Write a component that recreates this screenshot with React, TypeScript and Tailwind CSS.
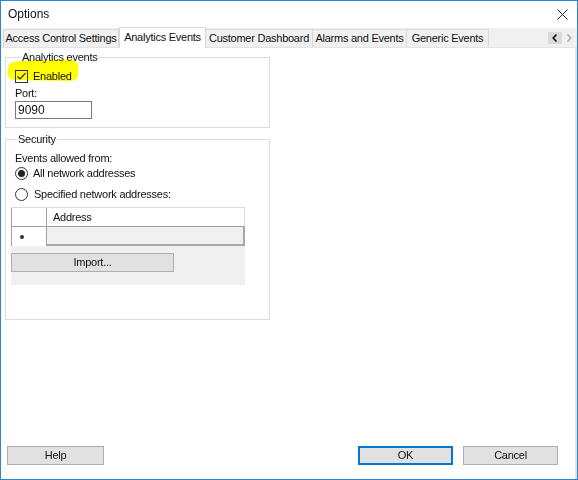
export default function App() {
  const tabs = [
    { label: "Access Control Settings", w: "w-[116px]" },
    { label: "Analytics Events", w: "w-[87px]", active: true },
    { label: "Customer Dashboard", w: "w-[107px]" },
    { label: "Alarms and Events", w: "w-[94px]" },
    { label: "Generic Events", w: "w-[82px]" },
  ];

  return (
    <div className="w-[578px] h-[480px] bg-white border border-[#2b87d6] flex flex-col font-['Liberation_Sans',Arial,sans-serif] text-[11px] leading-[13px] text-[#111] tracking-[-0.25px] overflow-hidden">
      {/* title bar */}
      <div className="h-[27px] shrink-0 flex items-center justify-between pl-[7px] pr-[9px]">
        <span className="text-[12px] tracking-normal">Options</span>
        <svg width="11" height="11" viewBox="0 0 11 11">
          <path d="M0.5 0.5 L10.5 10.5 M10.5 0.5 L0.5 10.5" stroke="#222" strokeWidth="1" />
        </svg>
      </div>

      {/* tab strip */}
      <div className="h-[19px] shrink-0 bg-[#f0f0f0] flex items-end pl-[2px] relative z-10">
        {tabs.map((t, i) =>
          t.active ? (
            <div
              key={t.label}
              className={`${t.w} h-[21px] -mb-px bg-white border border-b-0 border-[#d9d9d9] flex items-center justify-center pb-[2px]`}
            >
              {t.label}
            </div>
          ) : (
            <div
              key={t.label}
              className={`${t.w} h-[18px] border-t border-r border-[#d9d9d9] ${i === 0 ? "border-l" : ""} flex items-center justify-center`}
            >
              {t.label}
            </div>
          )
        )}
        <div className="ml-auto mr-[1px] self-center flex items-center">
          <div className="w-[14px] h-[12px] bg-[#dadada] flex items-center justify-center">
            <svg width="6" height="8" viewBox="0 0 6 8">
              <path d="M4.5 0.5 L1.2 4 L4.5 7.5" stroke="#111" strokeWidth="1.6" fill="none" />
            </svg>
          </div>
          <div className="w-[14px] h-[12px] flex items-center justify-center">
            <svg width="6" height="8" viewBox="0 0 6 8">
              <path d="M1.5 0.5 L4.8 4 L1.5 7.5" stroke="#a8a8a8" strokeWidth="1.4" fill="none" />
            </svg>
          </div>
        </div>
      </div>

      {/* tab page */}
      <div className="flex-1 flex flex-col border-t border-r-2 border-[#e3e3e3] pl-[4px]">
        {/* Analytics events group */}
        <fieldset className="relative mt-[3px] w-[265px] h-[77px] border border-[#dcdcdc] pl-[9px] pt-[5px]">
          <legend className="ml-[6px] px-[1px]">Analytics events</legend>
          <svg
            className="absolute left-0 top-[-6px] mix-blend-multiply pointer-events-none"
            width="80"
            height="26"
            viewBox="0 0 80 26"
          >
            <path
              d="M2,9 C3,3 12,3 25,2.5 L62,1.5 C70,1.5 72.5,5 72.5,10 L72,18 C71.5,22.5 66,23.5 58,23 L10,22 C3,22 1.5,18.5 1.5,14 Z"
              fill="#ffff00"
            />
          </svg>
          <div className="relative h-[14px] flex items-center gap-[5px]">
            <svg width="13" height="13" viewBox="0 0 13 13">
              <rect x="0.5" y="0.5" width="12" height="12" fill="none" stroke="#333" />
              <path d="M2.5 6.5 L5 9 L10.5 3.2" stroke="#222" strokeWidth="1.2" fill="none" />
            </svg>
            <span>Enabled</span>
          </div>
          <div className="h-[14px] mt-[3px] flex items-center">Port:</div>
          <div className="mt-px w-[77px] h-[18px] border border-[#7a7a7a] flex items-center pl-[2px] text-[12px] tracking-normal">
            9090
          </div>
        </fieldset>

        {/* Security group */}
        <fieldset className="mt-[5px] w-[265px] h-[187px] border border-[#dcdcdc] pl-[5px] pt-[5px]">
          <legend className="ml-[6px] px-[1px]">Security</legend>
          <div className="h-[14px] ml-[4px] flex items-center">Events allowed from:</div>
          <div className="h-[14px] ml-[4px] mt-px flex items-center gap-[5px]">
            <svg width="13" height="13" viewBox="0 0 13 13">
              <circle cx="6.5" cy="6.5" r="6" fill="none" stroke="#333" />
              <circle cx="6.5" cy="6.5" r="3.5" fill="#222" />
            </svg>
            <span>All network addresses</span>
          </div>
          <div className="h-[14px] ml-[4px] mt-[7px] flex items-center gap-[6px]">
            <svg width="13" height="13" viewBox="0 0 13 13">
              <circle cx="6.5" cy="6.5" r="6" fill="none" stroke="#333" />
            </svg>
            <span>Specified network addresses:</span>
          </div>

          {/* grid */}
          <div className="mt-[6px] w-[234px] h-[78px] bg-[#f0f0f0] flex flex-col">
            <div className="h-[19px] flex bg-white border-t border-[#dcdcdc]">
              <div className="w-[36px] border-l border-r border-[#a0a0a0]" />
              <div className="flex-1 flex items-center pl-[6px] border-r border-[#dcdcdc]">Address</div>
            </div>
            <div className="h-[20px] flex border-t border-[#a0a0a0]">
              <div className="w-[36px] bg-white border-l border-r border-[#a0a0a0] flex items-center pl-[8px]">
                <span className="w-[4px] h-[4px] rounded-full bg-[#333]" />
              </div>
              <div className="flex-1 bg-[#f0f0f0] border-r-2 border-b-2 border-[#a8a8a8]" />
            </div>
            <div className="mt-[7px] w-[163px] h-[19px] bg-[#e1e1e1] border border-[#adadad] flex items-center justify-center">
              Import...
            </div>
          </div>
        </fieldset>

        <div className="flex-1" />

        {/* buttons */}
        <div className="flex items-center pl-[2px] pr-[17px] pb-[14px]">
          <div className="w-[97px] h-[19px] bg-[#e1e1e1] border border-[#adadad] flex items-center justify-center">
            Help
          </div>
          <div className="ml-auto w-[95px] h-[19px] bg-[#e1e1e1] border-2 border-[#0078d7] flex items-center justify-center">
            OK
          </div>
          <div className="ml-[10px] w-[95px] h-[19px] bg-[#e1e1e1] border border-[#adadad] flex items-center justify-center">
            Cancel
          </div>
        </div>
      </div>
    </div>
  );
}
